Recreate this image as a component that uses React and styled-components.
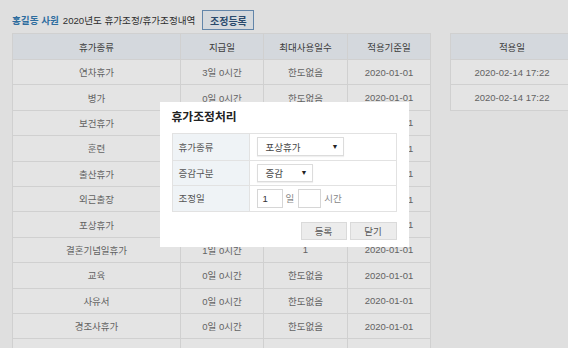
import React from 'react';
import styled, {createGlobalStyle} from 'styled-components';

const GlobalStyle = createGlobalStyle`
html, body {
  margin: 0;
  padding: 0;
  overflow: hidden;
  background: #f9f9f9;
  font-family: "Liberation Sans", "Noto Sans CJK KR", sans-serif;
}
`

const Page = styled.div`
padding: 10px 0 0 12px;
width: 600px;
`
const TitleBar = styled.div`
display: flex;
align-items: center;
height: 20px;
font-size: 9.6px;
color: #333;
margin-bottom: 3px;
`
const Name = styled.span`
color: #347ab2;
font-weight: 700;
margin-right: 4px;
`
const RegisterButton = styled.button`
margin-left: 7px;
height: 20px;
width: 52px;
padding: 0;
border: 1.5px solid #6e95bd;
background: #eef2f6;
color: #2f5379;
font-family: inherit;
font-size: 10px;
font-weight: 700;
`
const Tables = styled.div`
display: flex;
align-items: flex-start;
gap: 19px;
`
const Table = styled.table`
border-collapse: collapse;
width: ${p => p.width}px;
table-layout: fixed;
font-size: 9.5px;
color: #6e6e6e;
background: #fefefe;
th, td {
  border: 1px solid #e8e8e8;
  text-align: center;
  padding: 0;
}
th {
  background: #ecf1f6;
  color: #444;
  font-weight: 400;
  height: 25px;
}
td {
  height: 24.4px;
}
`

const Overlay = styled.div`
position: fixed;
inset: 0;
background: rgba(0, 0, 0, 0.1);
display: flex;
align-items: center;
justify-content: center;
`
const Modal = styled.div`
width: 249px;
height: 145px;
box-sizing: border-box;
background: #fff;
padding: 6px 12px 9px;
display: flex;
flex-direction: column;
font-family: "Liberation Sans", "Noto Sans CJK KR", sans-serif;
`
const ModalTitle = styled.div`
font-size: 11.8px;
font-weight: 700;
color: #222;
height: 19px;
line-height: 19px;
margin-bottom: 6px;
`
const FormTable = styled.table`
border-collapse: collapse;
width: 225px;
table-layout: fixed;
font-size: 9.5px;
color: #555;
td {
  border: 1px solid #e2e2e2;
  padding: 0;
}
`
const Label = styled.td`
width: 70px;
background: #eff3f6;
padding-left: 6px !important;
height: ${p => p.h}px;
`
const Field = styled.td`
padding-left: 7px !important;
`
const FieldRow = styled.div`
display: flex;
align-items: center;
gap: 3px;
`
const Select = styled.div`
width: ${p => p.width}px;
height: ${p => p.height}px;
box-sizing: border-box;
border: 1px solid #dcdcdc;
box-shadow: 0 1px 1px rgba(0, 0, 0, 0.06);
display: flex;
align-items: center;
justify-content: space-between;
padding: 0 4px 0 8px;
color: #444;
`
const Arrow = styled.span`
font-size: 7px;
color: #222;
`
const Input = styled.div`
width: ${p => p.width}px;
height: 19px;
box-sizing: border-box;
border: 1px solid #d6d6d6;
padding-left: 5px;
display: flex;
align-items: center;
color: #333;
`
const Unit = styled.span`
color: #888;
margin-right: 1px;
`
const Buttons = styled.div`
display: flex;
justify-content: flex-end;
gap: 3px;
margin-top: 10px;
`
const ModalButton = styled.button`
width: ${p => p.width}px;
height: 18px;
padding: 0;
border: 1px solid #dadada;
background: #ececec;
color: #555;
font-family: inherit;
font-size: 9.5px;
`

const rows = [
    ['연차휴가', '3일 0시간', '한도없음', '2020-01-01'],
    ['병가', '0일 0시간', '한도없음', '2020-01-01'],
    ['보건휴가', '0일 0시간', '한도없음', '2020-01-01'],
    ['훈련', '0일 0시간', '한도없음', '2020-01-01'],
    ['출산휴가', '0일 0시간', '한도없음', '2020-01-01'],
    ['외근출장', '0일 0시간', '한도없음', '2020-01-01'],
    ['포상휴가', '0일 0시간', '한도없음', '2020-01-01'],
    ['결혼기념일휴가', '1일 0시간', '1', '2020-01-01'],
    ['교육', '0일 0시간', '한도없음', '2020-01-01'],
    ['사유서', '0일 0시간', '한도없음', '2020-01-01'],
    ['경조사휴가', '0일 0시간', '한도없음', '2020-01-01'],
    ['', '', '', ''],
];

export default function App() {
    return (
        <>
            <GlobalStyle/>
            <Page>
                <TitleBar>
                    <Name>홍길동 사원</Name>
                    2020년도 휴가조정/휴가조정내역
                    <RegisterButton>조정등록</RegisterButton>
                </TitleBar>
                <Tables>
                    <Table width={418}>
                        <colgroup>
                            <col style={{width: 168}}/>
                            <col style={{width: 83}}/>
                            <col style={{width: 84}}/>
                            <col style={{width: 83}}/>
                        </colgroup>
                        <thead>
                        <tr>
                            <th>휴가종류</th>
                            <th>지급일</th>
                            <th>최대사용일수</th>
                            <th>적용기준일</th>
                        </tr>
                        </thead>
                        <tbody>
                        {rows.map((r, n) => (
                            <tr key={n}>
                                {r.map((c, i) => <td key={i}>{c}</td>)}
                            </tr>
                        ))}
                        </tbody>
                    </Table>
                    <Table width={124}>
                        <thead>
                        <tr><th>적용일</th></tr>
                        </thead>
                        <tbody>
                        <tr><td>2020-02-14 17:22</td></tr>
                        <tr><td>2020-02-14 17:22</td></tr>
                        </tbody>
                    </Table>
                </Tables>
            </Page>
            <Overlay>
                <Modal>
                    <ModalTitle>휴가조정처리</ModalTitle>
                    <FormTable>
                        <tbody>
                        <tr>
                            <Label h={26}>휴가종류</Label>
                            <Field>
                                <Select width={87} height={19}>포상휴가<Arrow>▼</Arrow></Select>
                            </Field>
                        </tr>
                        <tr>
                            <Label h={24}>증감구분</Label>
                            <Field>
                                <Select width={56} height={18}>증감<Arrow>▼</Arrow></Select>
                            </Field>
                        </tr>
                        <tr>
                            <Label h={25}>조정일</Label>
                            <Field>
                                <FieldRow>
                                    <Input width={26}>1</Input>
                                    <Unit>일</Unit>
                                    <Input width={23}/>
                                    <Unit>시간</Unit>
                                </FieldRow>
                            </Field>
                        </tr>
                        </tbody>
                    </FormTable>
                    <Buttons>
                        <ModalButton width={46}>등록</ModalButton>
                        <ModalButton width={47}>닫기</ModalButton>
                    </Buttons>
                </Modal>
            </Overlay>
        </>
    )
}
